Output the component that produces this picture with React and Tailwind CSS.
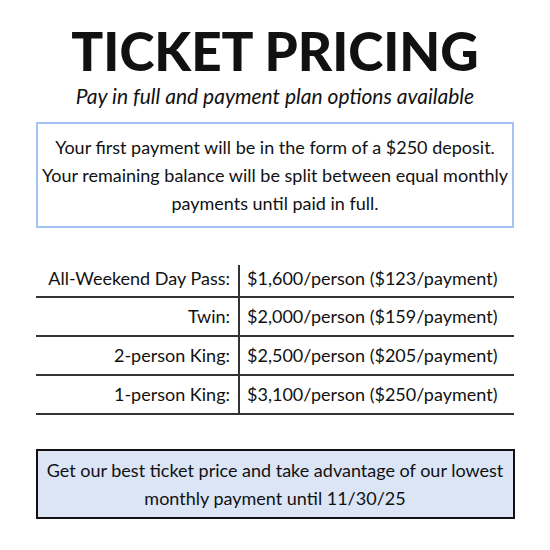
const rows = [
  ["All-Weekend Day Pass:", "$1,600/person ($123/payment)"],
  ["Twin:", "$2,000/person ($159/payment)"],
  ["2-person King:", "$2,500/person ($205/payment)"],
  ["1-person King:", "$3,100/person ($250/payment)"],
];

export default function App() {
  return (
    <div className="w-[550px] h-[550px] bg-white text-[#111] font-['Lato',sans-serif] flex flex-col items-center whitespace-nowrap">
      <h1 className="mt-[22px] text-[53px] leading-[58px] font-black">TICKET PRICING</h1>
      <p className="mt-[3px] text-[21px] leading-[26px] italic">Pay in full and payment plan options available</p>

      <div className="mt-[13px] w-[478px] h-[106px] border-2 border-[#a4c2f4] flex items-center justify-center text-center text-[18px] leading-[28px]">
        <p>
          Your first payment will be in the form of a $250 deposit.<br />
          Your remaining balance will be split between equal monthly<br />
          payments until paid in full.
        </p>
      </div>

      <div className="mt-[37px] w-[478px] flex flex-col text-[18px]">
        {rows.map(([label, price], i) => (
          <div key={i} className={`flex border-b-2 border-[#333] ${i === 0 ? "h-[33px]" : "h-[39px]"}`}>
            <div className={`w-[202px] flex items-center justify-end pr-[8px] ${i === 0 ? "pb-[5px]" : ""}`}>
              {label}
            </div>
            <div className={`flex-1 flex items-center pl-[7px] border-l-2 border-[#333] ${i === 0 ? "pb-[5px]" : ""}`}>
              {price}
            </div>
          </div>
        ))}
      </div>

      <div className="mt-[34px] w-[479px] h-[70px] border-2 border-[#111] bg-[#dbe5f6] flex items-center justify-center text-center text-[18px] leading-[28px]">
        <p>
          Get our best ticket price and take advantage of our lowest<br />
          monthly payment until 11/30/25
        </p>
      </div>
    </div>
  );
}
